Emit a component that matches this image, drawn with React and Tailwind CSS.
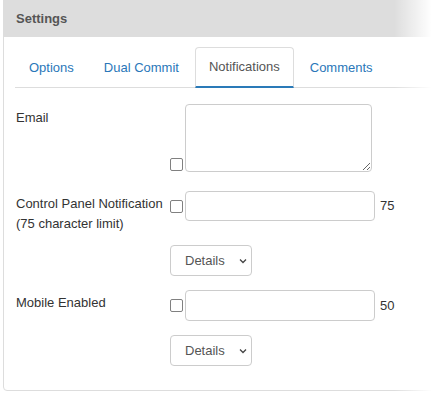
import React from "react";

const font = { fontFamily: '"Liberation Sans", Arial, sans-serif' };

function Check() {
  return <span className="block w-[13px] h-[13px] shrink-0 border border-[#808080] rounded-[2px] bg-white" />;
}

function Select() {
  return (
    <div className="flex items-center justify-between w-[82px] h-[31px] border border-[#ccc] rounded-[4px] bg-white pl-[14px] pr-[4px] text-[13px] text-[#555]">
      <span>Details</span>
      <svg width="8" height="6" viewBox="0 0 8 6" fill="none">
        <path d="M1 1.5 L4 4.5 L7 1.5" stroke="#444" strokeWidth="1.3" />
      </svg>
    </div>
  );
}

function Tab({ children, active }) {
  return (
    <div
      className={
        "mr-[2px] px-[13px] h-[41px] flex items-center border rounded-t-[4px] -mb-px " +
        (active
          ? "border-[#ddd] border-b-2 border-b-[#2a7ab8] bg-white text-[#555]"
          : "border-transparent text-[#2a77b9]")
      }
    >
      {children}
    </div>
  );
}

export default function App() {
  return (
    <div className="relative w-[440px] h-[393px] overflow-hidden bg-white text-[13px] leading-[20px] text-[#333]" style={font}>
      <div className="ml-[3px] w-[460px] -mt-px border border-[#ddd] rounded-b-[4px]">
        <div className="h-[37px] bg-[#dddddd] flex items-center pl-[12px] font-bold text-[#555]">Settings</div>
        <div className="px-[11px] pt-[10px] pb-[24px]">
          <div className="flex border-b border-[#ddd] h-[41px]">
            <Tab>Options</Tab>
            <Tab>Dual Commit</Tab>
            <Tab active>Notifications</Tab>
            <Tab>Comments</Tab>
          </div>

          <div className="mt-[16px] flex items-end">
            <div className="w-[155px] pl-px pt-[4px] self-start">Email</div>
            <div className="mb-px mr-[2px]"><Check /></div>
            <textarea className="block w-[187px] h-[68px] border border-[#ccc] rounded-[4px] resize-y" />
          </div>

          <div className="mt-[19px] flex items-start">
            <div className="w-[155px] pl-px pt-[3px]">
              Control Panel Notification
              <br />
              (75 character limit)
            </div>
            <div className="flex items-center h-[30px]">
              <div className="mr-[2px]"><Check /></div>
              <div className="w-[190px] h-[30px] border border-[#ccc] rounded-[4px]" />
              <span className="ml-[5px]">75</span>
            </div>
          </div>

          <div className="mt-[11px] pl-[155px]">
            <Select />
          </div>

          <div className="mt-[14px] flex items-start">
            <div className="w-[155px] pl-px pt-[3px]">Mobile Enabled</div>
            <div className="flex items-center h-[31px]">
              <div className="mr-[2px]"><Check /></div>
              <div className="w-[190px] h-[31px] border border-[#ccc] rounded-[4px]" />
              <span className="ml-[5px]">50</span>
            </div>
          </div>

          <div className="mt-[14px] pl-[155px]">
            <Select />
          </div>
        </div>
      </div>
      <div className="absolute top-0 right-0 h-full w-[46px] bg-[linear-gradient(to_right,rgba(255,255,255,0),#fff_82%)]" />
    </div>
  );
}
